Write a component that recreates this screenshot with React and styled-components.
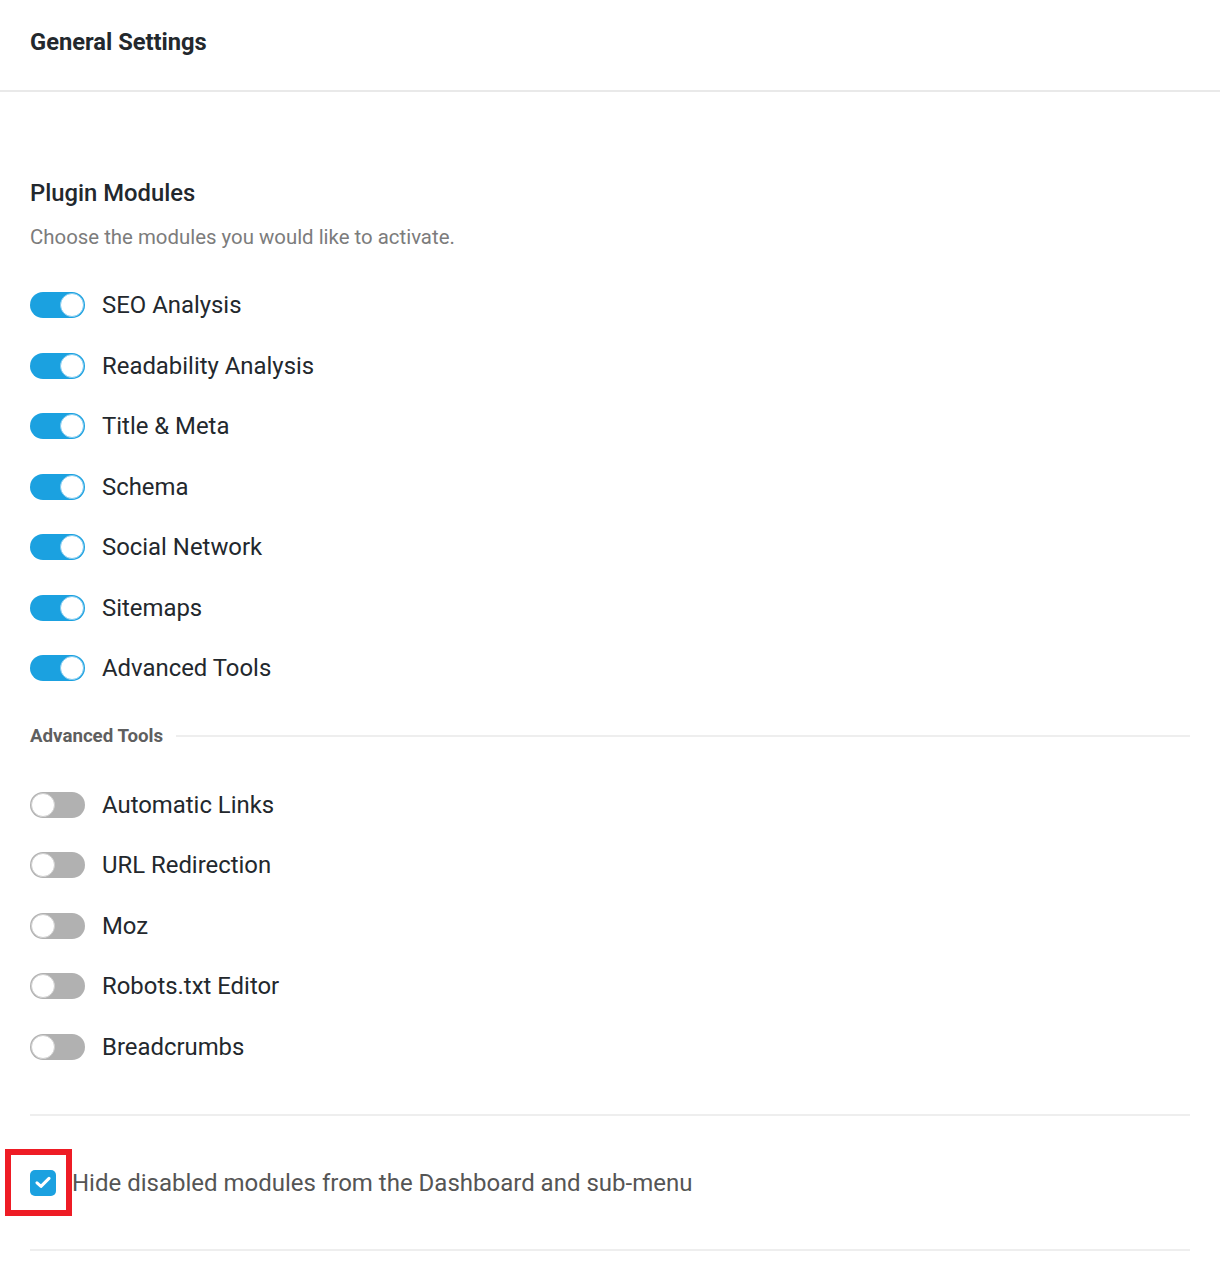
import React from 'react';
import styled, { createGlobalStyle } from 'styled-components';

const GlobalStyle = createGlobalStyle`
  body {
    margin: 0;
    background: #ffffff;
    font-family: Roboto, "Liberation Sans", sans-serif;
    color: #23282d;
  }
`;

const Page = styled.div`
  width: 1220px;
  min-height: 1261px;
  background: #fff;
`;

const Header = styled.header`
  height: 90px;
  display: flex;
  align-items: center;
  padding: 0 30px;
  border-bottom: 2px solid #e9e9e9;
  box-sizing: content-box;
`;

const Title = styled.h1`
  margin: 0;
  font-size: 23.7px;
  font-weight: 700;
  color: #23282d;
  line-height: 1;
  transform: translateY(-2px);
`;

const Body = styled.main`
  padding: 86px 30px 0;
`;

const SectionTitle = styled.h2`
  margin: 0;
  font-size: 23.8px;
  font-weight: 500;
  line-height: 30px;
  color: #23282d;
`;

const Description = styled.p`
  margin: 16px 0 0;
  font-size: 20.4px;
  line-height: 26px;
  color: #7c7c7c;
`;

const ModuleList = styled.div`
  display: flex;
  flex-direction: column;
  margin-top: ${(p) => p.$top}px;
`;

const ModuleRow = styled.label`
  height: 60.5px;
  display: flex;
  align-items: center;
  gap: 17px;
  font-size: 23.9px;
  color: #23282d;
`;

const Toggle = styled.span`
  position: relative;
  width: 55px;
  height: 26px;
  border-radius: 13px;
  background: ${(p) => (p.$on ? '#1ba1e0' : '#b1b1b1')};
  flex-shrink: 0;

  &::after {
    content: '';
    position: absolute;
    top: 1px;
    left: ${(p) => (p.$on ? '30px' : '1px')};
    width: 24px;
    height: 24px;
    border-radius: 50%;
    background: #fff;
    box-sizing: border-box;
    border: 1px solid ${(p) => (p.$on ? '#7fcaf0' : '#cfcfcf')};
  }
`;

const SubHeader = styled.div`
  display: flex;
  align-items: center;
  gap: 13px;
  margin-top: 25px;
  height: 24px;
  font-size: 18.7px;
  font-weight: 700;
  color: #5f5f5f;

  &::after {
    content: '';
    flex: 1;
    height: 2px;
    background: #eeeeee;
  }
`;

const Divider = styled.hr`
  margin: ${(p) => p.$top}px 0 0;
  border: none;
  height: 2px;
  background: #eeeeee;
`;

const CheckRow = styled.label`
  height: 133px;
  display: flex;
  align-items: center;
  gap: 16px;
  font-size: 24px;
  color: #555;
`;

const CheckWrap = styled.span`
  position: relative;
  display: inline-flex;
`;

const CheckBox = styled.span`
  width: 26px;
  height: 26px;
  border-radius: 5px;
  background: #1ba1e0;
  display: flex;
  align-items: center;
  justify-content: center;
`;

const Highlight = styled.span`
  position: absolute;
  left: -25px;
  top: -21px;
  width: 67px;
  height: 67px;
  box-sizing: border-box;
  border: 6px solid #ee1c25;
  pointer-events: none;
`;

const activeModules = [
  'SEO Analysis',
  'Readability Analysis',
  'Title & Meta',
  'Schema',
  'Social Network',
  'Sitemaps',
  'Advanced Tools',
];

const advancedModules = [
  'Automatic Links',
  'URL Redirection',
  'Moz',
  'Robots.txt Editor',
  'Breadcrumbs',
];

const App = () => {
  return (
    <Page>
      <GlobalStyle />
      <Header>
        <Title>General Settings</Title>
      </Header>
      <Body>
        <SectionTitle>Plugin Modules</SectionTitle>
        <Description>Choose the modules you would like to activate.</Description>

        <ModuleList $top={25}>
          {activeModules.map((name) => (
            <ModuleRow key={name}>
              <Toggle $on />
              {name}
            </ModuleRow>
          ))}
        </ModuleList>

        <SubHeader>Advanced Tools</SubHeader>

        <ModuleList $top={27}>
          {advancedModules.map((name) => (
            <ModuleRow key={name}>
              <Toggle />
              {name}
            </ModuleRow>
          ))}
        </ModuleList>

        <Divider $top={37} />
        <CheckRow>
          <CheckWrap>
            <CheckBox>
              <svg width="16" height="13" viewBox="0 0 16 13">
                <path d="M2 6.8 L6 10.4 L14 2.4" fill="none" stroke="#fff" strokeWidth="3" strokeLinecap="round" strokeLinejoin="round" />
              </svg>
            </CheckBox>
            <Highlight />
          </CheckWrap>
          Hide disabled modules from the Dashboard and sub-menu
        </CheckRow>
        <Divider $top={0} />
      </Body>
    </Page>
  );
};

export default App;
